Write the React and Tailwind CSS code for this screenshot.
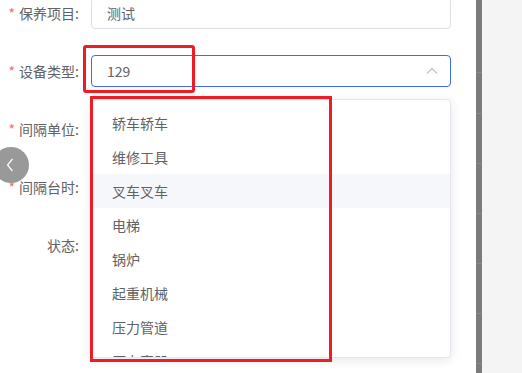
import React from "react";

const fields = [
  { label: "保养项目", required: true, value: "测试", kind: "input" },
  { label: "设备类型", required: true, value: "129", kind: "select" },
  { label: "间隔单位", required: true },
  { label: "间隔台时", required: true },
  { label: "状态", required: false },
];

const options = ["轿车轿车", "维修工具", "叉车叉车", "电梯", "锅炉", "起重机械", "压力管道", "压力容器"];

export default function App() {
  return (
    <div
      className="flex w-[522px] h-[373px] overflow-hidden text-[14px] text-[#606266]"
      style={{ fontFamily: '"Noto Sans CJK SC", "Noto Sans", sans-serif' }}
    >
      <div className="relative w-[476px] h-full bg-white">
        {/* form */}
        <div className="flex flex-col gap-[26px] mt-[-3px]">
          {fields.map((f) => (
            <div key={f.label} className="flex items-center h-8">
              <label className="w-[91px] shrink-0 pr-3 text-right leading-none">
                {f.required && <span className="text-[#f56c6c] mr-1">*</span>}
                {f.label}:
              </label>
              {f.kind === "input" && (
                <div className="w-[360px] h-8 border border-[#dcdfe6] rounded flex items-center px-[15px]">
                  {f.value}
                </div>
              )}
              {f.kind === "select" && (
                <div className="w-[360px] h-8 border border-[#4169f0] rounded flex items-center justify-between px-[15px]">
                  <span>{f.value}</span>
                  <svg width="12" height="8" viewBox="0 0 12 8" fill="none" stroke="#c0c4cc" strokeWidth="1.3" className="mr-[-3px]">
                    <path d="M1 6.5 6 1.5l5 5" />
                  </svg>
                </div>
              )}
            </div>
          ))}
        </div>

        {/* dropdown */}
        <div className="absolute left-[91px] top-[99px] w-[360px] h-[259px] bg-white border border-[#e4e7ed] rounded shadow-[0_2px_12px_rgba(0,0,0,0.1)] overflow-hidden">
          <ul className="py-[6px]">
            {options.map((o, i) => (
              <li
                key={o}
                className={`h-[34px] flex items-center px-5 ${i === 2 ? "bg-[#f5f7fa]" : ""}`}
              >
                {o}
              </li>
            ))}
          </ul>
        </div>

        {/* back button */}
        <div className="absolute left-[-7px] top-[147px] w-9 h-9 rounded-full bg-[#999999] flex items-center justify-center">
          <svg width="8" height="14" viewBox="0 0 8 14" fill="none" stroke="white" strokeWidth="1.2" className="ml-[-2px]">
            <path d="M6.5 1 1.5 7l5 6" />
          </svg>
        </div>

        {/* annotations */}
        <div className="absolute left-[83px] top-[45px] w-[112px] h-[48px] border-[3px] border-[#ee1c24] rounded-[3px]" />
        <div className="absolute left-[90px] top-[96px] w-[242px] h-[266px] border-[3px] border-[#ee1c24]" />
      </div>

      <div className="w-[6px] h-full bg-[#7b7b7b] flex flex-col">
        <div className="h-[73px] border-b border-[#8a8a8a]" />
        <div className="h-[41px] border-b border-[#8a8a8a]" />
        <div className="h-[50px] border-b border-[#8a8a8a]" />
        <div className="h-[50px] border-b border-[#8a8a8a]" />
        <div className="h-[50px] border-b border-[#8a8a8a]" />
        <div className="h-[50px] border-b border-[#8a8a8a]" />
        <div className="h-[50px] border-b border-[#8a8a8a]" />
      </div>
      <div className="flex-1 h-full bg-[#f4f4f4]" />
    </div>
  );
}
